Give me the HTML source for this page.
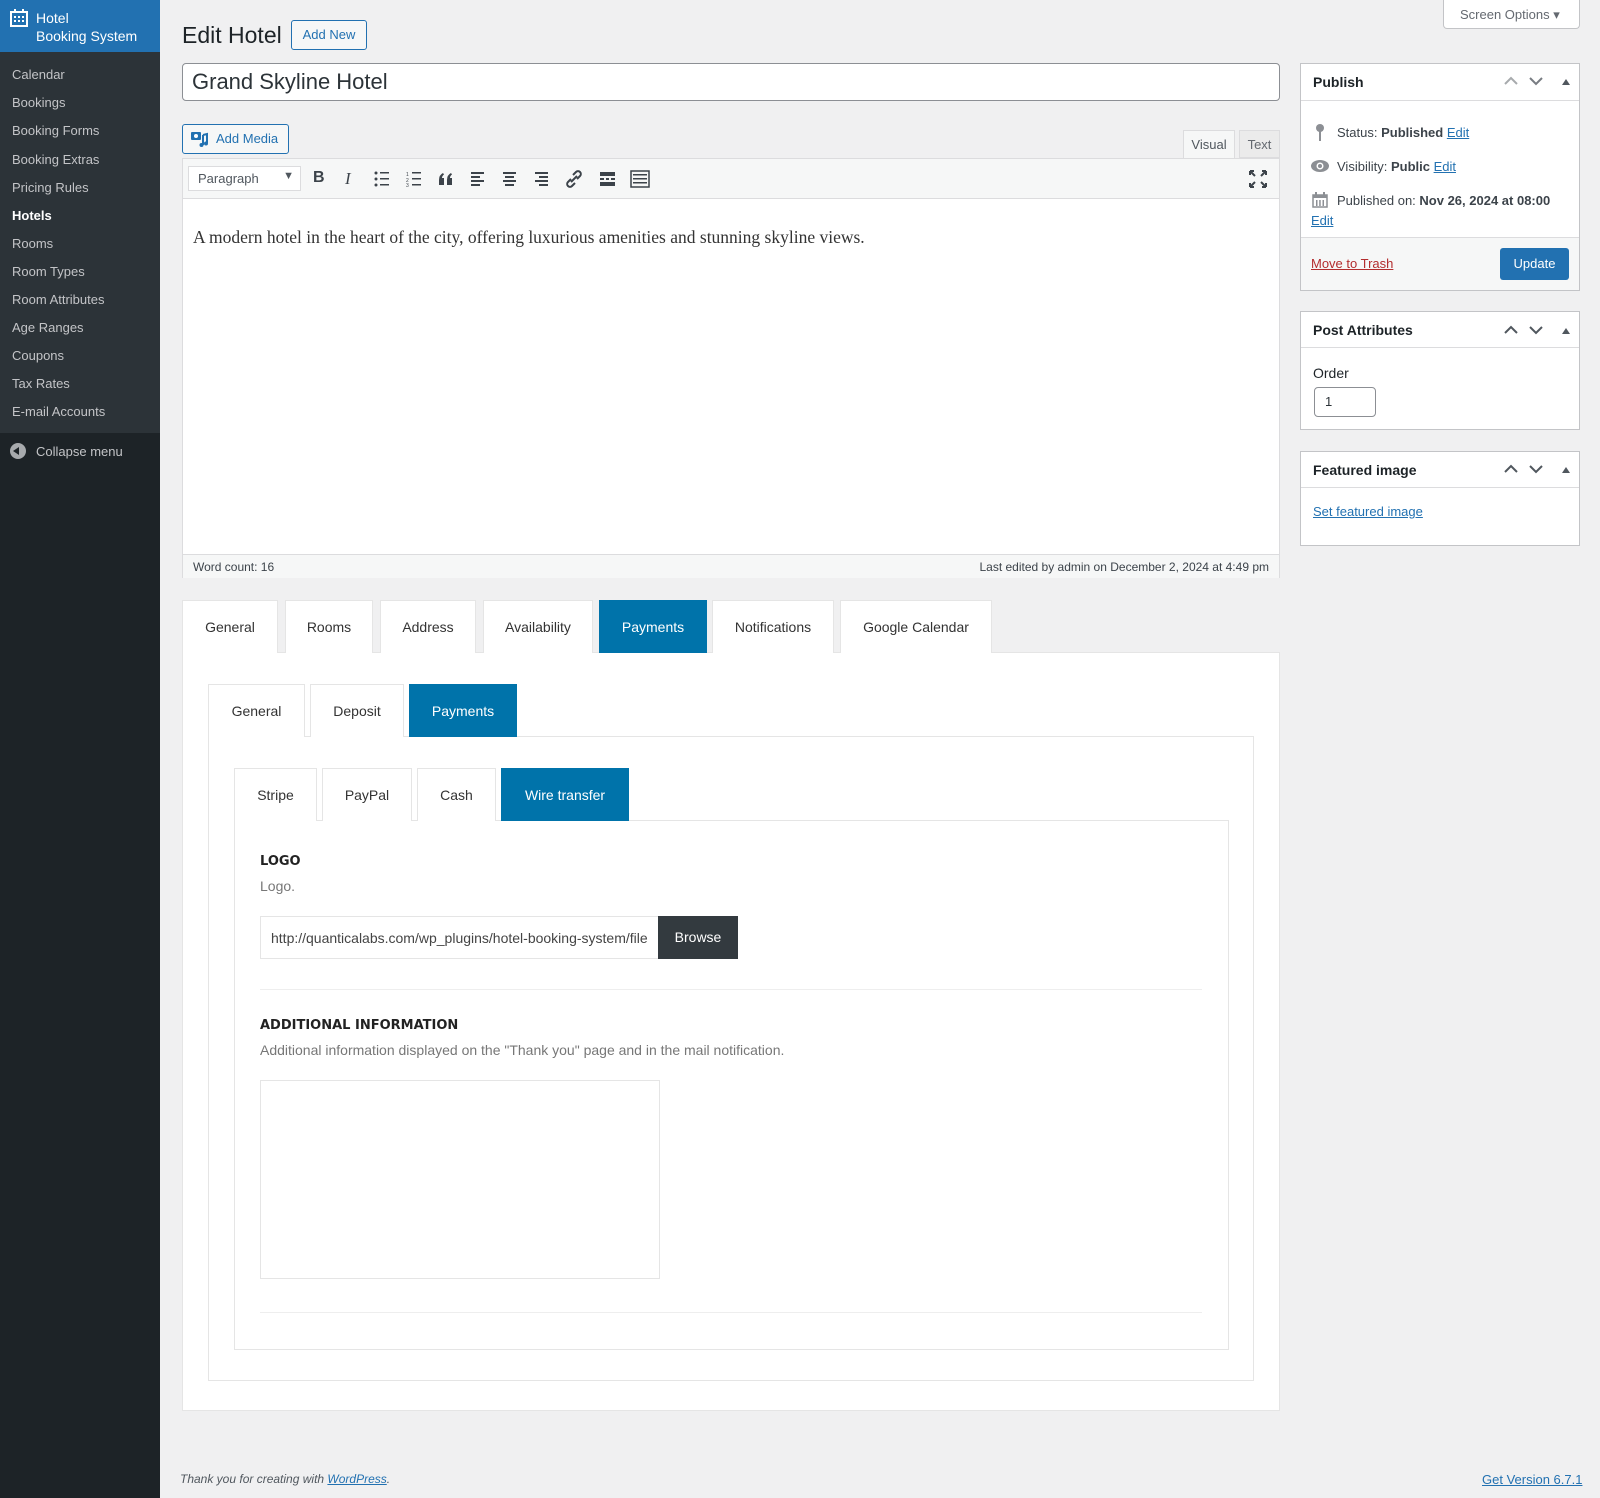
<!DOCTYPE html>
<html><head><meta charset="utf-8"><style>
*{box-sizing:border-box;margin:0;padding:0}
body{width:1600px;height:1498px;background:#f0f0f1;font-family:"Liberation Sans",Arial,sans-serif;font-size:13px;color:#3c434a;position:relative;overflow:hidden}
.a{position:absolute}
#side{left:0;top:0;width:160px;height:1498px;background:#1d2327}
#sub{left:0;top:52px;width:160px;height:381px;background:#2c3338}
#head{left:0;top:0;width:160px;height:52px;background:#2271b1;color:#fff;font-size:14px;line-height:18px;padding:9px 0 0 36px}
.mi{left:12px;color:#c3c4c7;font-size:13px}
.box{background:#fff;border:1px solid #c3c4c7}
.tab{position:absolute;background:#fff;border:1px solid #e5e5e5;border-bottom:none;font-size:14px;color:#333;text-align:center;display:flex;align-items:center;justify-content:center}
.tab.on{background:#0073aa;color:#fff;border-color:#0073aa}
a{color:#2271b1}
.hdr{font-size:14px;font-weight:bold;color:#1d2327}
</style></head><body>
<div class="a" id="side"></div>
<div class="a" id="sub"></div>
<div class="a" id="head"><svg class="a" style="left:10px;top:9px" width="18" height="18" viewBox="0 0 18 18"><rect x="1" y="3" width="16" height="14" fill="none" stroke="#fff" stroke-width="2"/><rect x="4" y="0" width="2" height="4" fill="#fff"/><rect x="12" y="0" width="2" height="4" fill="#fff"/><g fill="#fff"><rect x="4" y="7" width="2" height="2"/><rect x="8" y="7" width="2" height="2"/><rect x="12" y="7" width="2" height="2"/><rect x="4" y="11" width="2" height="2"/><rect x="8" y="11" width="2" height="2"/><rect x="12" y="11" width="2" height="2"/></g></svg>Hotel<br>Booking System</div>
<div class="a" style="left:152px;top:18px;width:0;height:0;border:8px solid transparent;border-right-color:#f0f0f1"></div>
<div class="a mi" style="top:67px">Calendar</div>
<div class="a mi" style="top:95px">Bookings</div>
<div class="a mi" style="top:123px">Booking Forms</div>
<div class="a mi" style="top:152px">Booking Extras</div>
<div class="a mi" style="top:180px">Pricing Rules</div>
<div class="a mi" style="top:208px;color:#fff;font-weight:bold">Hotels</div>
<div class="a mi" style="top:236px">Rooms</div>
<div class="a mi" style="top:264px">Room Types</div>
<div class="a mi" style="top:292px">Room Attributes</div>
<div class="a mi" style="top:320px">Age Ranges</div>
<div class="a mi" style="top:348px">Coupons</div>
<div class="a mi" style="top:376px">Tax Rates</div>
<div class="a mi" style="top:404px">E-mail Accounts</div>
<div class="a" style="left:10px;top:443px;width:16px;height:16px;border-radius:50%;background:#a7aaad"></div>
<div class="a" style="left:13px;top:447px;width:0;height:0;border:4px solid transparent;border-right:6px solid #1d2327;border-left:none"></div>
<div class="a mi" style="left:36px;top:444px">Collapse menu</div>

<div class="a" style="left:182px;top:22px;font-size:23px;color:#1d2327">Edit Hotel</div>
<div class="a" style="left:291px;top:20px;width:76px;height:30px;border:1px solid #2271b1;border-radius:3px;background:#f6f7f7;color:#2271b1;font-size:13px;text-align:center;line-height:28px">Add New</div>
<div class="a" style="left:1443px;top:0;width:137px;height:29px;background:#fff;border:1px solid #c3c4c7;border-top:none;border-radius:0 0 4px 4px;color:#646970;font-size:13px;line-height:29px;padding-left:16px">Screen Options &#9662;</div>

<div class="a" style="left:182px;top:63px;width:1098px;height:38px;background:#fff;border:1px solid #8c8f94;border-radius:4px;font-size:22px;color:#2c3338;padding:5px 9px">Grand Skyline Hotel</div>
<div class="a" style="left:182px;top:124px;width:107px;height:30px;border:1px solid #2271b1;border-radius:3px;background:#f6f7f7;color:#2271b1;font-size:13px;line-height:28px;padding-left:33px">Add Media</div>
<svg class="a" style="left:191px;top:131px" width="18" height="17" viewBox="0 0 18 17"><rect x="0" y="1" width="10" height="8" rx="1" fill="#2271b1"/><circle cx="5" cy="5" r="2" fill="#fff"/><path d="M12 4v10M12 4l4-1v9" stroke="#2271b1" stroke-width="2" fill="none"/><circle cx="10.5" cy="14" r="2" fill="#2271b1"/><circle cx="15" cy="12.5" r="2" fill="#2271b1"/></svg>

<div class="a" style="left:1183px;top:130px;width:52px;height:29px;background:#f6f7f7;border:1px solid #dcdcde;border-bottom:none;color:#50575e;text-align:center;line-height:28px">Visual</div>
<div class="a" style="left:1239px;top:130px;width:41px;height:28px;background:#ebebeb;border:1px solid #dcdcde;color:#646970;text-align:center;line-height:28px">Text</div>
<div class="a" style="left:182px;top:158px;width:1098px;height:420px;border:1px solid #dcdcde;background:#fff"></div>
<div class="a" style="left:183px;top:159px;width:1096px;height:40px;background:#f6f7f7;border-bottom:1px solid #dcdcde"></div>
<div class="a" style="left:188px;top:166px;width:113px;height:25px;background:#fff;border:1px solid #dcdcde;font-size:13px;color:#50575e;padding:4px 9px">Paragraph<span style="position:absolute;right:6px;top:3px;font-size:11px">&#9660;</span></div>
<div class="a" style="left:313px;top:169px;font-size:16px;font-weight:bold;color:#3c434a">B</div>
<div class="a" style="left:345px;top:169px;font-size:17px;font-style:italic;font-family:'Liberation Serif',serif;color:#3c434a">I</div>
<svg class="a" style="left:374px;top:170px" width="300" height="18" viewBox="0 0 300 18" fill="#3c434a">
<circle cx="2" cy="3" r="1.5"/><circle cx="2" cy="9" r="1.5"/><circle cx="2" cy="15" r="1.5"/><rect x="6" y="2" width="9" height="1.5"/><rect x="6" y="8" width="9" height="1.5"/><rect x="6" y="14" width="9" height="1.5"/>
<rect x="38" y="2" width="9" height="1.5"/><rect x="38" y="8" width="9" height="1.5"/><rect x="38" y="14" width="9" height="1.5"/><text x="32" y="6" font-size="5">1</text><text x="32" y="12" font-size="5">2</text><text x="32" y="17" font-size="5">3</text>
<path d="M65 15v-5q0-5 4-7l1 1.5q-2 1.5-2 3.5h2v7zM73 15v-5q0-5 4-7l1 1.5q-2 1.5-2 3.5h2v7z"/>
<rect x="97" y="2" width="13" height="2"/><rect x="97" y="6" width="9" height="2"/><rect x="97" y="10" width="13" height="2"/><rect x="97" y="14" width="9" height="2"/>
<rect x="129" y="2" width="13" height="2"/><rect x="131" y="6" width="9" height="2"/><rect x="129" y="10" width="13" height="2"/><rect x="131" y="14" width="9" height="2"/>
<rect x="161" y="2" width="13" height="2"/><rect x="165" y="6" width="9" height="2"/><rect x="161" y="10" width="13" height="2"/><rect x="165" y="14" width="9" height="2"/>
<path d="M197 9l-3 3a2.5 2.5 0 0 0 4 4l3-3M203 9l3-3a2.5 2.5 0 0 0-4-4l-3 3M197 12l6-6" stroke="#3c434a" stroke-width="2" fill="none"/>
<rect x="226" y="2" width="15" height="4"/><rect x="226" y="8" width="4" height="2"/><rect x="232" y="8" width="3" height="2"/><rect x="237" y="8" width="4" height="2"/><rect x="226" y="12" width="15" height="4"/>
<rect x="257" y="1" width="18" height="16" fill="none" stroke="#3c434a" stroke-width="1.5"/><rect x="259" y="4" width="14" height="1.5"/><rect x="259" y="8" width="14" height="1.5"/><rect x="259" y="12" width="14" height="1.5"/>
</svg>
<svg class="a" style="left:1249px;top:170px" width="18" height="18" viewBox="0 0 18 18" fill="none" stroke="#3c434a" stroke-width="2"><path d="M1 1l5 5M17 1l-5 5M1 17l5-5M17 17l-5-5"/><path d="M1 1h4M1 1v4M17 1h-4M17 1v4M1 17h4M1 17v-4M17 17h-4M17 17v-4"/></svg>
<div class="a" style="left:193px;top:227px;font-family:'Liberation Serif',serif;font-size:17.5px;color:#333">A modern hotel in the heart of the city, offering luxurious amenities and stunning skyline views.</div>
<div class="a" style="left:183px;top:554px;width:1096px;height:24px;background:#f6f7f7;border-top:1px solid #dcdcde;font-size:12px;color:#3c434a;padding:5px 10px">Word count: 16<span style="float:right">Last edited by admin on December 2, 2024 at 4:49 pm</span></div>

<div class="a" style="left:182px;top:652px;width:1098px;height:759px;background:#fff;border:1px solid #e5e5e5"></div>
<div class="tab" style="left:182px;top:600px;width:96px;height:53px">General</div>
<div class="tab" style="left:285px;top:600px;width:88px;height:53px">Rooms</div>
<div class="tab" style="left:380px;top:600px;width:96px;height:53px">Address</div>
<div class="tab" style="left:483px;top:600px;width:110px;height:53px">Availability</div>
<div class="tab on" style="left:599px;top:600px;width:108px;height:53px">Payments</div>
<div class="tab" style="left:712px;top:600px;width:122px;height:53px">Notifications</div>
<div class="tab" style="left:840px;top:600px;width:152px;height:53px">Google Calendar</div>

<div class="a" style="left:208px;top:736px;width:1046px;height:645px;border:1px solid #e5e5e5"></div>
<div class="tab" style="left:208px;top:684px;width:97px;height:53px">General</div>
<div class="tab" style="left:310px;top:684px;width:94px;height:53px">Deposit</div>
<div class="tab on" style="left:409px;top:684px;width:108px;height:53px">Payments</div>

<div class="a" style="left:234px;top:820px;width:995px;height:530px;border:1px solid #e5e5e5"></div>
<div class="tab" style="left:234px;top:768px;width:83px;height:53px">Stripe</div>
<div class="tab" style="left:322px;top:768px;width:90px;height:53px">PayPal</div>
<div class="tab" style="left:417px;top:768px;width:79px;height:53px">Cash</div>
<div class="tab on" style="left:501px;top:768px;width:128px;height:53px">Wire transfer</div>

<div class="a" style="left:260px;top:854px;font-weight:bold;color:#222;font-family:'DejaVu Sans',sans-serif;font-size:13px">LOGO</div>
<div class="a" style="left:260px;top:878px;font-size:14px;color:#777">Logo.</div>
<div class="a" style="left:260px;top:916px;width:399px;height:43px;border:1px solid #e5e5e5;background:#fff;font-size:14px;color:#444;padding:13px 10px;overflow:hidden;white-space:nowrap">http://quanticalabs.com/wp_plugins/hotel-booking-system/file</div>
<div class="a" style="left:658px;top:916px;width:80px;height:43px;background:#333a3f;color:#fff;font-size:14px;text-align:center;line-height:43px">Browse</div>
<div class="a" style="left:260px;top:989px;width:942px;height:1px;background:#eee"></div>
<div class="a" style="left:260px;top:1018px;font-weight:bold;color:#222;font-family:'DejaVu Sans',sans-serif;font-size:13px">ADDITIONAL INFORMATION</div>
<div class="a" style="left:260px;top:1042px;font-size:14px;color:#777">Additional information displayed on the "Thank you" page and in the mail notification.</div>
<div class="a" style="left:260px;top:1080px;width:400px;height:199px;border:1px solid #e5e5e5;background:#fff"></div>
<div class="a" style="left:260px;top:1312px;width:942px;height:1px;background:#eee"></div>

<div class="a" style="left:180px;top:1472px;font-size:12px;font-style:italic;color:#50575e">Thank you for creating with <a href="#">WordPress</a>.</div>
<div class="a" style="left:1482px;top:1472px;font-size:13px;color:#2271b1;text-decoration:underline">Get Version 6.7.1</div>

<div class="a box" style="left:1300px;top:63px;width:280px;height:228px"></div>
<div class="a" style="left:1301px;top:100px;width:278px;height:1px;background:#dcdcde"></div>
<div class="a hdr" style="left:1313px;top:74px">Publish</div>
<svg class="a" style="left:1502px;top:74px" width="70" height="14" viewBox="0 0 70 14" fill="none" stroke-width="2"><path d="M3 10l6-6 6 6" stroke="#a7aaad"/><path d="M28 4l6 6 6-6" stroke="#787c82"/><path d="M60 11l4-6 4 6z" fill="#50575e" stroke="none"/></svg>
<svg class="a" style="left:1315px;top:124px" width="10" height="17" viewBox="0 0 10 17"><circle cx="5" cy="4" r="4" fill="#8c8f94"/><rect x="4" y="6" width="2" height="11" fill="#8c8f94"/></svg>
<div class="a" style="left:1337px;top:125px;color:#3c434a">Status: <b>Published</b> <a href="#">Edit</a></div>
<svg class="a" style="left:1311px;top:160px" width="18" height="12" viewBox="0 0 18 12"><ellipse cx="9" cy="6" rx="9" ry="6" fill="#8c8f94"/><circle cx="9" cy="6" r="3.5" fill="#fff"/><circle cx="9" cy="6" r="2" fill="#8c8f94"/></svg>
<div class="a" style="left:1337px;top:159px">Visibility: <b>Public</b> <a href="#">Edit</a></div>
<svg class="a" style="left:1312px;top:192px" width="16" height="16" viewBox="0 0 16 16"><rect x="1" y="3" width="14" height="12" fill="none" stroke="#8c8f94" stroke-width="1.5"/><rect x="1" y="3" width="14" height="3" fill="#8c8f94"/><rect x="3" y="0" width="2" height="4" fill="#8c8f94"/><rect x="11" y="0" width="2" height="4" fill="#8c8f94"/><g fill="#8c8f94"><rect x="4" y="8" width="1.5" height="6"/><rect x="7.2" y="8" width="1.5" height="6"/><rect x="10.5" y="8" width="1.5" height="6"/></g></svg>
<div class="a" style="left:1337px;top:193px">Published on: <b>Nov 26, 2024 at 08:00</b></div>
<div class="a" style="left:1311px;top:213px"><a href="#">Edit</a></div>
<div class="a" style="left:1301px;top:237px;width:278px;height:53px;background:#f6f7f7;border-top:1px solid #dcdcde"></div>
<div class="a" style="left:1311px;top:256px"><a href="#" style="color:#b32d2e">Move to Trash</a></div>
<div class="a" style="left:1500px;top:248px;width:69px;height:32px;background:#2271b1;border-radius:3px;color:#fff;text-align:center;line-height:32px">Update</div>

<div class="a box" style="left:1300px;top:311px;width:280px;height:119px"></div>
<div class="a" style="left:1301px;top:347px;width:278px;height:1px;background:#dcdcde"></div>
<div class="a hdr" style="left:1313px;top:322px">Post Attributes</div>
<svg class="a" style="left:1502px;top:323px" width="70" height="14" viewBox="0 0 70 14" fill="none" stroke-width="2"><path d="M3 10l6-6 6 6" stroke="#50575e"/><path d="M28 4l6 6 6-6" stroke="#50575e"/><path d="M60 11l4-6 4 6z" fill="#50575e" stroke="none"/></svg>
<div class="a" style="left:1313px;top:365px;font-size:14px;color:#1d2327">Order</div>
<div class="a" style="left:1314px;top:387px;width:62px;height:30px;border:1px solid #8c8f94;border-radius:4px;background:#fff;padding:6px 10px;font-size:13px;color:#2c3338">1</div>

<div class="a box" style="left:1300px;top:451px;width:280px;height:95px"></div>
<div class="a" style="left:1301px;top:487px;width:278px;height:1px;background:#dcdcde"></div>
<div class="a hdr" style="left:1313px;top:462px">Featured image</div>
<svg class="a" style="left:1502px;top:462px" width="70" height="14" viewBox="0 0 70 14" fill="none" stroke-width="2"><path d="M3 10l6-6 6 6" stroke="#50575e"/><path d="M28 4l6 6 6-6" stroke="#50575e"/><path d="M60 11l4-6 4 6z" fill="#50575e" stroke="none"/></svg>
<div class="a" style="left:1313px;top:504px"><a href="#">Set featured image</a></div>
</body></html>
